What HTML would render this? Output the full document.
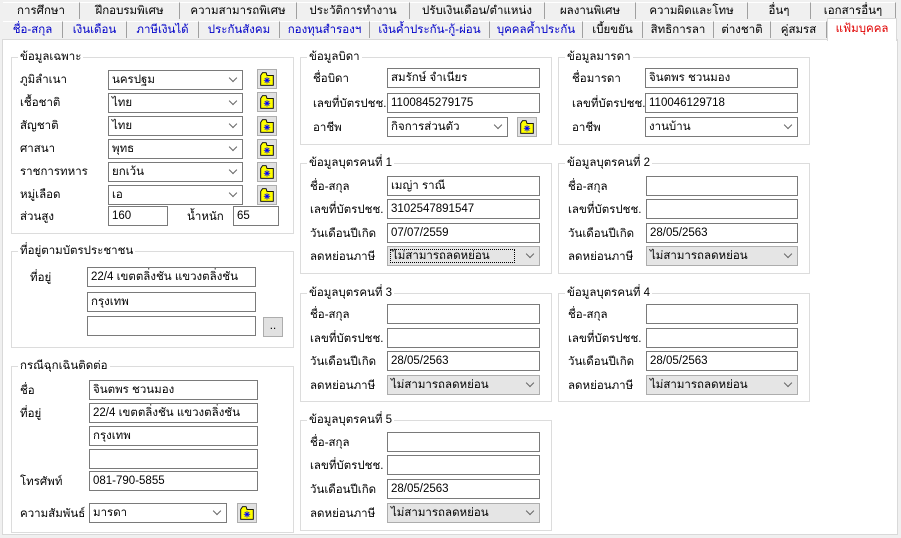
<!DOCTYPE html>
<html><head><meta charset="utf-8"><style>
*{box-sizing:border-box;margin:0;padding:0}
body{width:901px;height:538px;background:#f0f0f0;font-family:"Liberation Sans","Noto Sans CJK SC",sans-serif;font-size:11.5px;color:#000;position:relative;overflow:hidden}
.a{position:absolute}
.tab{position:absolute;height:17px;line-height:17px;text-align:center;border-right:1px solid #a0a0a0;border-top:1px solid #fff;white-space:nowrap;font-size:11.5px}
.t2{color:#0000c8}
#panel{position:absolute;left:2px;top:39px;width:896px;height:496px;background:#fff;border:1px solid #d9d9d9}
.g{position:absolute;border:1px solid #dcdcdc}
.gt{position:absolute;top:-8px;left:6px;background:#fff;padding:0 2px;line-height:14px}
.l{position:absolute;line-height:14px;white-space:nowrap}
.in{position:absolute;height:20px;border:1px solid #7a7a7a;background:#fff;padding-left:3px;line-height:18px;white-space:nowrap;overflow:hidden}
.cb:after{content:"";position:absolute;right:6px;top:4px;width:5px;height:5px;border-right:1px solid #666;border-bottom:1px solid #666;transform:rotate(45deg)}
.gray{background:#e5e5e5;border-color:#adadad}
.ic{position:absolute;width:20px;height:20px;background:#e1e1e1;border:1px solid #adadad}
.btn{position:absolute;background:#e1e1e1;border:1px solid #adadad;text-align:center;line-height:16px}
</style></head><body>
<div class="tab" style="left:3px;top:2px;width:77px">การศึกษา</div>
<div class="tab" style="left:80px;top:2px;width:100px">ฝึกอบรมพิเศษ</div>
<div class="tab" style="left:180px;top:2px;width:117px">ความสามารถพิเศษ</div>
<div class="tab" style="left:297px;top:2px;width:113px">ประวัติการทำงาน</div>
<div class="tab" style="left:410px;top:2px;width:135px">ปรับเงินเดือน/ตำแหน่ง</div>
<div class="tab" style="left:545px;top:2px;width:91px">ผลงานพิเศษ</div>
<div class="tab" style="left:636px;top:2px;width:112px">ความผิดและโทษ</div>
<div class="tab" style="left:748px;top:2px;width:63px">อื่นๆ</div>
<div class="tab" style="left:811px;top:2px;width:85px">เอกสารอื่นๆ</div>
<div class="tab t2" style="left:3px;top:21px;width:60px">ชื่อ-สกุล</div>
<div class="tab t2" style="left:63px;top:21px;width:64px">เงินเดือน</div>
<div class="tab t2" style="left:127px;top:21px;width:72px">ภาษีเงินได้</div>
<div class="tab t2" style="left:199px;top:21px;width:81px">ประกันสังคม</div>
<div class="tab t2" style="left:280px;top:21px;width:90px">กองทุนสำรองฯ</div>
<div class="tab t2" style="left:370px;top:21px;width:120px">เงินค้ำประกัน-กู้-ผ่อน</div>
<div class="tab t2" style="left:490px;top:21px;width:93px">บุคคลค้ำประกัน</div>
<div class="tab" style="left:583px;top:21px;width:60px">เบี้ยขยัน</div>
<div class="tab" style="left:643px;top:21px;width:71px">สิทธิการลา</div>
<div class="tab" style="left:714px;top:21px;width:57px">ต่างชาติ</div>
<div class="tab" style="left:771px;top:21px;width:56px">คู่สมรส</div>
<div id="panel"></div>
<div class="tab" style="left:827px;top:18px;width:70px;height:23px;background:#fff;color:#e00000;border-top:1px solid #d9d9d9;border-left:1px solid #d9d9d9;border-right:1px solid #d9d9d9;line-height:20px">แฟ้มบุคคล</div>

<div class="g" style="left:11px;top:57px;width:283px;height:177px"><span class="gt">ข้อมูลเฉพาะ</span></div>
<div class="g" style="left:11px;top:251px;width:283px;height:97px"><span class="gt">ที่อยู่ตามบัตรประชาชน</span></div>
<div class="g" style="left:11px;top:366px;width:283px;height:167px"><span class="gt">กรณีฉุกเฉินติดต่อ</span></div>
<div class="g" style="left:300px;top:57px;width:252px;height:88px"><span class="gt">ข้อมูลบิดา</span></div>
<div class="g" style="left:558px;top:57px;width:252px;height:88px"><span class="gt">ข้อมูลมารดา</span></div>
<div class="g" style="left:300px;top:163px;width:252px;height:111px"><span class="gt">ข้อมูลบุตรคนที่ 1</span></div>
<div class="g" style="left:558px;top:163px;width:252px;height:111px"><span class="gt">ข้อมูลบุตรคนที่ 2</span></div>
<div class="g" style="left:300px;top:293px;width:252px;height:109px"><span class="gt">ข้อมูลบุตรคนที่ 3</span></div>
<div class="g" style="left:558px;top:293px;width:252px;height:109px"><span class="gt">ข้อมูลบุตรคนที่ 4</span></div>
<div class="g" style="left:300px;top:420px;width:252px;height:111px"><span class="gt">ข้อมูลบุตรคนที่ 5</span></div>

<div class="l" style="left:20px;top:73px">ภูมิลำเนา</div><div class="in cb" style="left:108px;top:70px;width:135px">นครปฐม</div>
<div class="l" style="left:20px;top:96px">เชื้อชาติ</div><div class="in cb" style="left:108px;top:93px;width:135px">ไทย</div>
<div class="l" style="left:20px;top:119px">สัญชาติ</div><div class="in cb" style="left:108px;top:116px;width:135px">ไทย</div>
<div class="l" style="left:20px;top:142px">ศาสนา</div><div class="in cb" style="left:108px;top:139px;width:135px">พุทธ</div>
<div class="l" style="left:20px;top:165px">ราชการทหาร</div><div class="in cb" style="left:108px;top:162px;width:135px">ยกเว้น</div>
<div class="l" style="left:20px;top:188px">หมู่เลือด</div><div class="in cb" style="left:108px;top:185px;width:135px">เอ</div>
<div class="l" style="left:20px;top:210px">ส่วนสูง</div><div class="in" style="left:108px;top:206px;width:60px">160</div>
<div class="l" style="left:187px;top:210px">น้ำหนัก</div><div class="in" style="left:233px;top:206px;width:46px">65</div>

<div class="l" style="left:30px;top:271px">ที่อยู่</div>
<div class="in" style="left:87px;top:267px;width:169px">22/4 เขตตลิ่งชัน แขวงตลิ่งชัน</div>
<div class="in" style="left:87px;top:292px;width:169px">กรุงเทพ</div>
<div class="in" style="left:87px;top:316px;width:169px"></div>
<div class="btn" style="left:263px;top:317px;width:20px;height:20px">..</div>

<div class="l" style="left:20px;top:384px">ชื่อ</div><div class="in" style="left:89px;top:380px;width:169px">จินตพร ชวนมอง</div>
<div class="l" style="left:20px;top:407px">ที่อยู่</div><div class="in" style="left:89px;top:403px;width:169px">22/4 เขตตลิ่งชัน แขวงตลิ่งชัน</div>
<div class="in" style="left:89px;top:426px;width:169px">กรุงเทพ</div>
<div class="in" style="left:89px;top:449px;width:169px"></div>
<div class="l" style="left:20px;top:475px">โทรศัพท์</div><div class="in" style="left:89px;top:471px;width:169px">081-790-5855</div>
<div class="l" style="left:20px;top:507px">ความสัมพันธ์</div><div class="in cb" style="left:89px;top:503px;width:138px">มารดา</div>

<div class="l" style="left:313px;top:72px">ชื่อบิดา</div><div class="in" style="left:387px;top:68px;width:153px">สมรักษ์ จำเนียร</div>
<div class="l" style="left:313px;top:97px">เลขที่บัตรปชช.</div><div class="in" style="left:387px;top:93px;width:153px">1100845279175</div>
<div class="l" style="left:313px;top:121px">อาชีพ</div><div class="in cb" style="left:387px;top:117px;width:121px">กิจการส่วนตัว</div>
<div class="l" style="left:572px;top:72px">ชื่อมารดา</div><div class="in" style="left:645px;top:68px;width:153px">จินตพร ชวนมอง</div>
<div class="l" style="left:572px;top:97px">เลขที่บัตรปชช.</div><div class="in" style="left:645px;top:93px;width:153px">110046129718</div>
<div class="l" style="left:572px;top:121px">อาชีพ</div><div class="in cb" style="left:645px;top:117px;width:153px">งานบ้าน</div>

<div class="l" style="left:310px;top:180px">ชื่อ-สกุล</div><div class="in" style="left:387px;top:176px;width:153px">เมญ่า ราณี</div>
<div class="l" style="left:310px;top:203px">เลขที่บัตรปชช.</div><div class="in" style="left:387px;top:199px;width:153px">3102547891547</div>
<div class="l" style="left:310px;top:227px">วันเดือนปีเกิด</div><div class="in" style="left:387px;top:223px;width:153px">07/07/2559</div>
<div class="l" style="left:310px;top:250px">ลดหย่อนภาษี</div><div class="in cb gray" style="left:387px;top:246px;width:153px"><span style="outline:1px dotted #000;padding:0 24px 0 1px">ไม่สามารถลดหย่อน</span></div>

<div class="l" style="left:568px;top:180px">ชื่อ-สกุล</div><div class="in" style="left:646px;top:176px;width:152px"></div>
<div class="l" style="left:568px;top:203px">เลขที่บัตรปชช.</div><div class="in" style="left:646px;top:199px;width:152px"></div>
<div class="l" style="left:568px;top:227px">วันเดือนปีเกิด</div><div class="in" style="left:646px;top:223px;width:152px">28/05/2563</div>
<div class="l" style="left:568px;top:250px">ลดหย่อนภาษี</div><div class="in cb gray" style="left:646px;top:246px;width:152px">ไม่สามารถลดหย่อน</div>

<div class="l" style="left:310px;top:308px">ชื่อ-สกุล</div><div class="in" style="left:387px;top:304px;width:153px"></div>
<div class="l" style="left:310px;top:332px">เลขที่บัตรปชช.</div><div class="in" style="left:387px;top:328px;width:153px"></div>
<div class="l" style="left:310px;top:355px">วันเดือนปีเกิด</div><div class="in" style="left:387px;top:351px;width:153px">28/05/2563</div>
<div class="l" style="left:310px;top:379px">ลดหย่อนภาษี</div><div class="in cb gray" style="left:387px;top:375px;width:153px">ไม่สามารถลดหย่อน</div>

<div class="l" style="left:568px;top:308px">ชื่อ-สกุล</div><div class="in" style="left:646px;top:304px;width:152px"></div>
<div class="l" style="left:568px;top:332px">เลขที่บัตรปชช.</div><div class="in" style="left:646px;top:328px;width:152px"></div>
<div class="l" style="left:568px;top:355px">วันเดือนปีเกิด</div><div class="in" style="left:646px;top:351px;width:152px">28/05/2563</div>
<div class="l" style="left:568px;top:379px">ลดหย่อนภาษี</div><div class="in cb gray" style="left:646px;top:375px;width:152px">ไม่สามารถลดหย่อน</div>

<div class="l" style="left:310px;top:436px">ชื่อ-สกุล</div><div class="in" style="left:387px;top:432px;width:153px"></div>
<div class="l" style="left:310px;top:459px">เลขที่บัตรปชช.</div><div class="in" style="left:387px;top:455px;width:153px"></div>
<div class="l" style="left:310px;top:483px">วันเดือนปีเกิด</div><div class="in" style="left:387px;top:479px;width:153px">28/05/2563</div>
<div class="l" style="left:310px;top:507px">ลดหย่อนภาษี</div><div class="in cb gray" style="left:387px;top:503px;width:153px">ไม่สามารถลดหย่อน</div>

<svg width="0" height="0" style="position:absolute"><defs><symbol id="f" viewBox="0 0 20 20"><path d="M3 6 L5 3 L9 3 L10 6 L17 6 L17 17 L3 17 Z" fill="#ffff00" stroke="#000"/><path d="M10 8v7M6.5 11.5h7M7.5 9l5 5M12.5 9l-5 5" stroke="#0000ff" stroke-width="1"/></symbol></defs></svg>
<div class="ic" style="left:257px;top:69px"><svg width="18" height="18"><use href="#f"/></svg></div>
<div class="ic" style="left:257px;top:92px"><svg width="18" height="18"><use href="#f"/></svg></div>
<div class="ic" style="left:257px;top:116px"><svg width="18" height="18"><use href="#f"/></svg></div>
<div class="ic" style="left:257px;top:139px"><svg width="18" height="18"><use href="#f"/></svg></div>
<div class="ic" style="left:257px;top:162px"><svg width="18" height="18"><use href="#f"/></svg></div>
<div class="ic" style="left:257px;top:185px"><svg width="18" height="18"><use href="#f"/></svg></div>
<div class="ic" style="left:517px;top:117px"><svg width="18" height="18"><use href="#f"/></svg></div>
<div class="ic" style="left:237px;top:503px"><svg width="18" height="18"><use href="#f"/></svg></div>
</body></html>
